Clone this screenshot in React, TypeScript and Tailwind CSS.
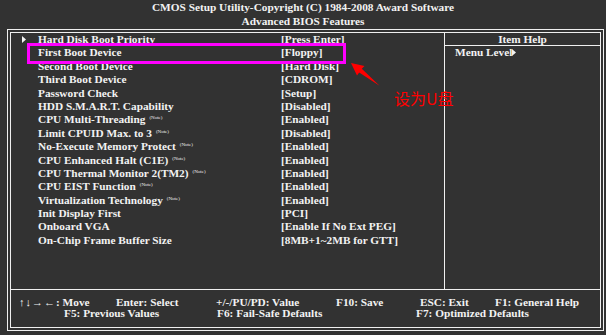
import React from "react";

type Row = { label: string; value: string; arrow?: boolean; note?: boolean };

const rows: Row[] = [
  { label: "Hard Disk Boot Priority", value: "[Press Enter]", arrow: true },
  { label: "First Boot Device", value: "[Floppy]" },
  { label: "Second Boot Device", value: "[Hard Disk]" },
  { label: "Third Boot Device", value: "[CDROM]" },
  { label: "Password Check", value: "[Setup]" },
  { label: "HDD S.M.A.R.T. Capability", value: "[Disabled]" },
  { label: "CPU Multi-Threading", value: "[Enabled]", note: true },
  { label: "Limit CPUID Max. to 3", value: "[Disabled]", note: true },
  { label: "No-Execute Memory Protect", value: "[Enabled]", note: true },
  { label: "CPU Enhanced Halt (C1E)", value: "[Enabled]", note: true },
  { label: "CPU Thermal Monitor 2(TM2)", value: "[Enabled]", note: true },
  { label: "CPU EIST Function", value: "[Enabled]", note: true },
  { label: "Virtualization Technology", value: "[Enabled]", note: true },
  { label: "Init Display First", value: "[PCI]" },
  { label: "Onboard VGA", value: "[Enable If No Ext PEG]" },
  { label: "On-Chip Frame Buffer Size", value: "[8MB+1~2MB for GTT]" },
];

function Tri() {
  return (
    <svg width="4" height="7" viewBox="0 0 4 7" className="inline-block">
      <polygon points="0,0 4,3.5 0,7" fill="#f2f2f2" />
    </svg>
  );
}

export default function App() {
  return (
    <div className="relative w-[606px] h-[335px] overflow-hidden bg-[#323232] text-[#f2f2f2] font-bold text-[11.3px] font-['Liberation_Serif','Times_New_Roman',serif]">
      <div className="text-center">
        <div className="h-[14px] leading-[14px]">
          CMOS Setup Utility-Copyright (C) 1984-2008 Award Software
        </div>
        <div className="h-[14px] leading-[14px]">Advanced BIOS Features</div>
      </div>

      <div className="mt-[1px] ml-[7px] w-[597px] h-[302px] border border-[#f0f0f0] p-[2px]">
        <div className="h-full border border-[#f0f0f0] flex flex-col">
          <div className="flex h-[256px]">
            <div className="w-[434px] border-r border-[#f0f0f0] pl-[11px]">
              {rows.map((r) => (
                <div key={r.label} className="flex h-[13.4px] leading-[13.4px] whitespace-nowrap">
                  <div className="w-[16px] flex items-center">
                    {r.arrow ? <Tri /> : null}
                  </div>
                  <div className="w-[243px]">
                    {r.label}
                    {r.note ? (
                      <span className="relative top-[-4px] ml-[4px] text-[5px] font-normal">
                        (Note)
                      </span>
                    ) : null}
                  </div>
                  <div>{r.value}</div>
                </div>
              ))}
            </div>
            <div className="flex-1 flex flex-col">
              <div className="h-[13px] leading-[12px] border-b border-[#f0f0f0] text-center">
                Item Help
              </div>
              <div className="pl-[10px] h-[12px] leading-[12px] flex items-center">
                <span>Menu Level</span>
                <Tri />
              </div>
            </div>
          </div>

          <div className="flex-1 border-t border-[#f0f0f0] pt-[7px] whitespace-nowrap">
            <div className="flex h-[11px] leading-[11px] pl-[8px]">
              <span className="w-[97px]">
                <span className="text-[11px] tracking-[1px]">↑↓→←</span>: Move
              </span>
              <span className="w-[100px]">Enter: Select</span>
              <span className="w-[120px]">+/-/PU/PD: Value</span>
              <span className="w-[84px]">F10: Save</span>
              <span className="w-[75px]">ESC: Exit</span>
              <span>F1: General Help</span>
            </div>
            <div className="flex h-[11px] leading-[11px] pl-[53px]">
              <span className="w-[153px]">F5: Previous Values</span>
              <span className="w-[199px]">F6: Fail-Safe Defaults</span>
              <span>F7: Optimized Defaults</span>
            </div>
          </div>
        </div>
      </div>

      {/* annotation overlay */}
      <div className="absolute left-[27px] top-[43px] w-[319px] h-[21px] border-[3px] border-[#ff00ff]" />
      <svg
        className="absolute left-0 top-0 pointer-events-none"
        width="606"
        height="335"
        viewBox="0 0 606 335"
      >
        <polygon
          points="351,63 364.5,66 361.8,68.8 379.5,85.8 359.2,72.5 357,75.5"
          fill="#ff0000"
        />
      </svg>
      <div className="absolute left-[394px] top-[88px] text-[16px] leading-[20px] font-normal text-[#ff0000] font-['Noto_Sans_CJK_SC',sans-serif]">
        设为U盘
      </div>
    </div>
  );
}
